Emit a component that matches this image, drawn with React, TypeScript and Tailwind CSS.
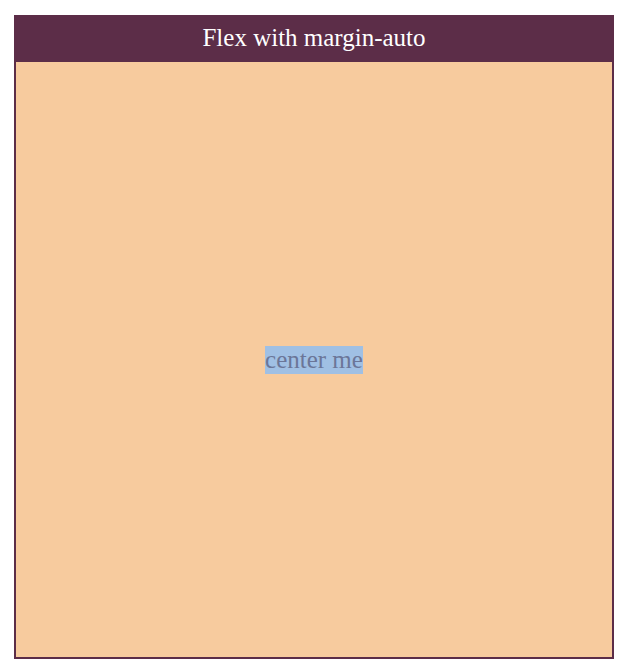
import React from "react";

const App: React.FC = () => {
  return (
    <div className="min-h-screen bg-white pt-[15px] pl-[14px] font-['Liberation_Serif',serif]">
      <div className="w-[600px] h-[644px] border-2 border-[#5c2d48] flex flex-col bg-[#f7cb9e]">
        {/* Header */}
        <div className="h-[45px] bg-[#5c2d48] text-white text-[25px] leading-[42px] text-center">
          Flex with margin-auto
        </div>

        {/* Body */}
        <div className="flex-1 flex">
          <div className="m-auto bg-[#a0c0e4] text-[#6b7698] text-[25px] leading-[28px]">
            center me
          </div>
        </div>
      </div>
    </div>
  );
};

export default App;
